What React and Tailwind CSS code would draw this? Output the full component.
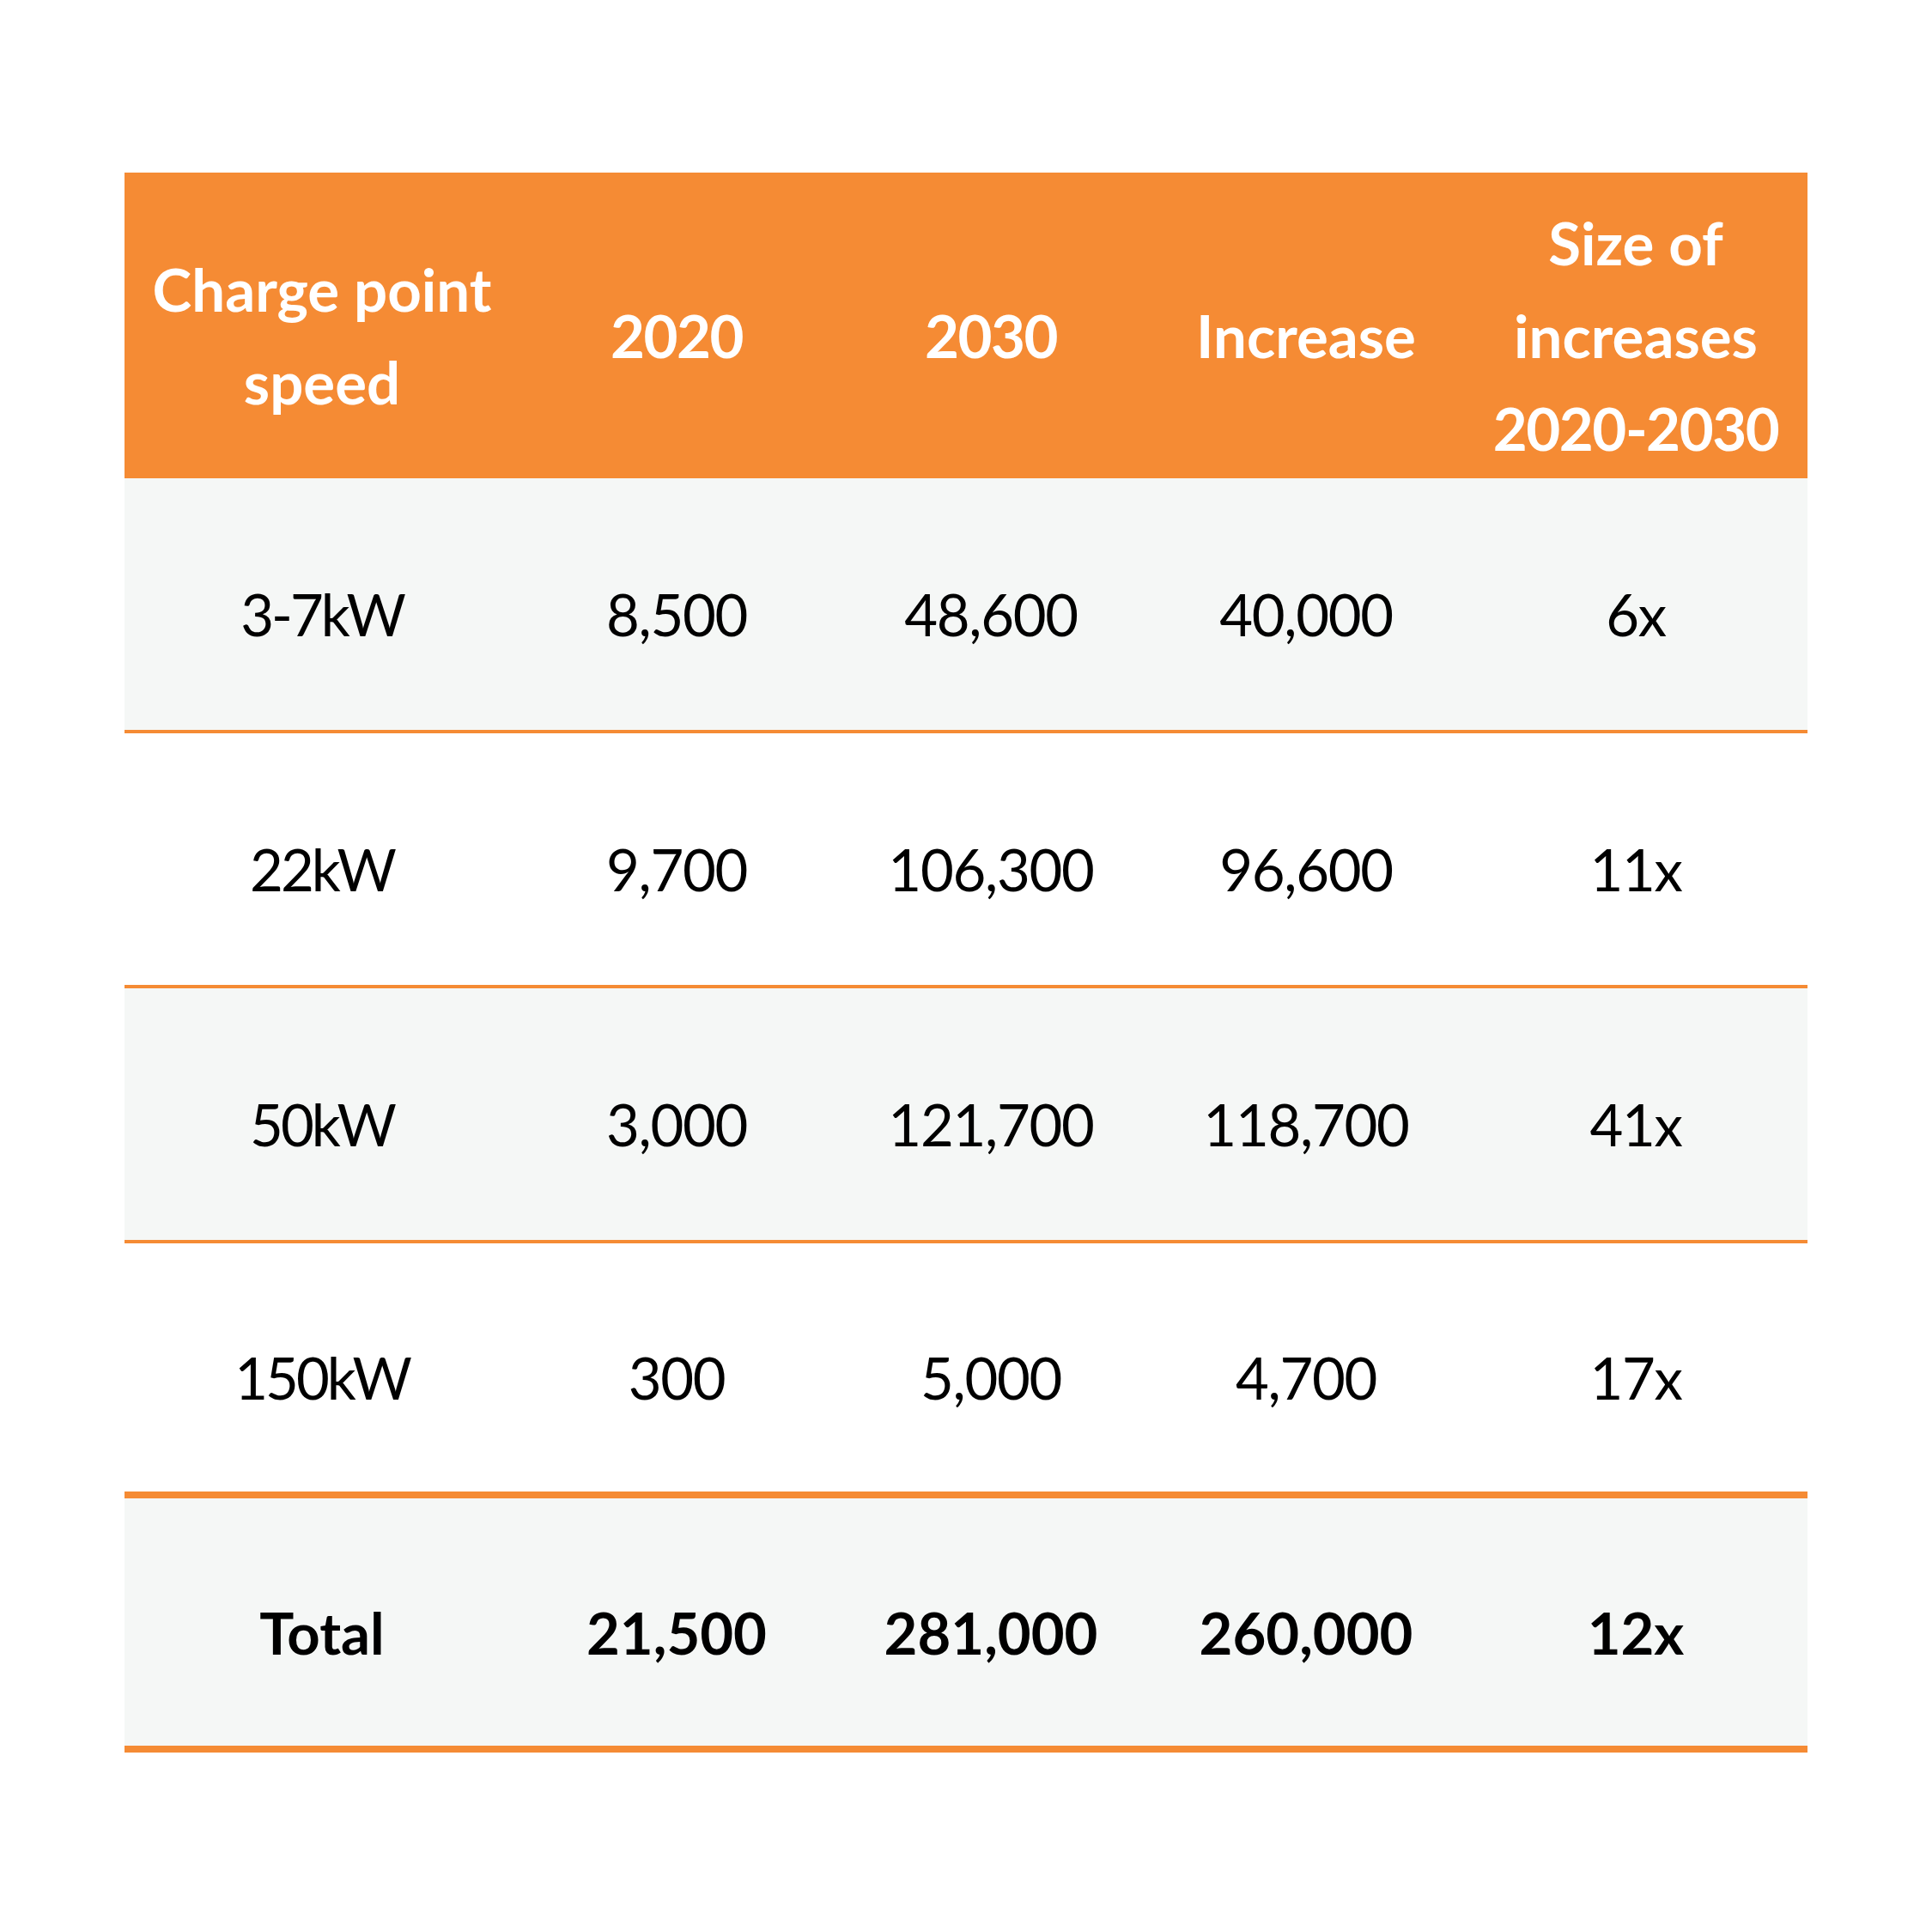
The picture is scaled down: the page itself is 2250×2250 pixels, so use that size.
import React from "react";

const rows = [
  ["3-7kW", "8,500", "48,600", "40,000", "6x"],
  ["22kW", "9,700", "106,300", "96,600", "11x"],
  ["50kW", "3,000", "121,700", "118,700", "41x"],
  ["150kW", "300", "5,000", "4,700", "17x"],
];

const cols = "grid grid-cols-[460px_366px_366px_368px_400px]";

export default function App() {
  return (
    <div className="w-[2250px] h-[2250px] bg-white pt-[201px] pl-[145px] font-['Lato','Noto_Sans',sans-serif]">
      <div className="w-[1960px]">
        {/* header */}
        <div className={`${cols} h-[356px] bg-[#f58b34] text-white font-bold text-[69px] leading-[108px] text-center items-center`}>
          <div className="pt-6">
            Charge point
            <br />
            speed
          </div>
          <div className="pt-6 tracking-[-1.5px]">2020</div>
          <div className="pt-6 tracking-[-1.5px]">2030</div>
          <div className="pt-6">Increase</div>
          <div className="pt-6">
            Size of
            <br />
            increases
            <br />
            <span className="tracking-[-1.5px]">2020-2030</span>
          </div>
        </div>

        {/* body */}
        {rows.map((r, i) => (
          <div
            key={r[0]}
            className={`${cols} items-center text-center text-black text-[67px] border-b-[#f58b34] ${
              i % 2 === 0 ? "bg-[#f5f7f6]" : "bg-white"
            } ${i === 3 ? "border-b-8 h-[297px]" : "border-b-4 h-[297px]"}`}
          >
            {r.map((c, j) => (
              <div key={j} className={`pt-6 ${j === 0 ? "tracking-[-3px]" : "tracking-[-1.3px]"}`}>
                {c}
              </div>
            ))}
          </div>
        ))}

        {/* total */}
        <div className={`${cols} items-center text-center text-black font-bold text-[67px] h-[296px] bg-[#f5f7f6] border-b-8 border-b-[#f58b34]`}>
          <div className="pt-6">Total</div>
          <div className="pt-6">21,500</div>
          <div className="pt-6">281,000</div>
          <div className="pt-6">260,000</div>
          <div className="pt-6">12x</div>
        </div>
      </div>
    </div>
  );
}
